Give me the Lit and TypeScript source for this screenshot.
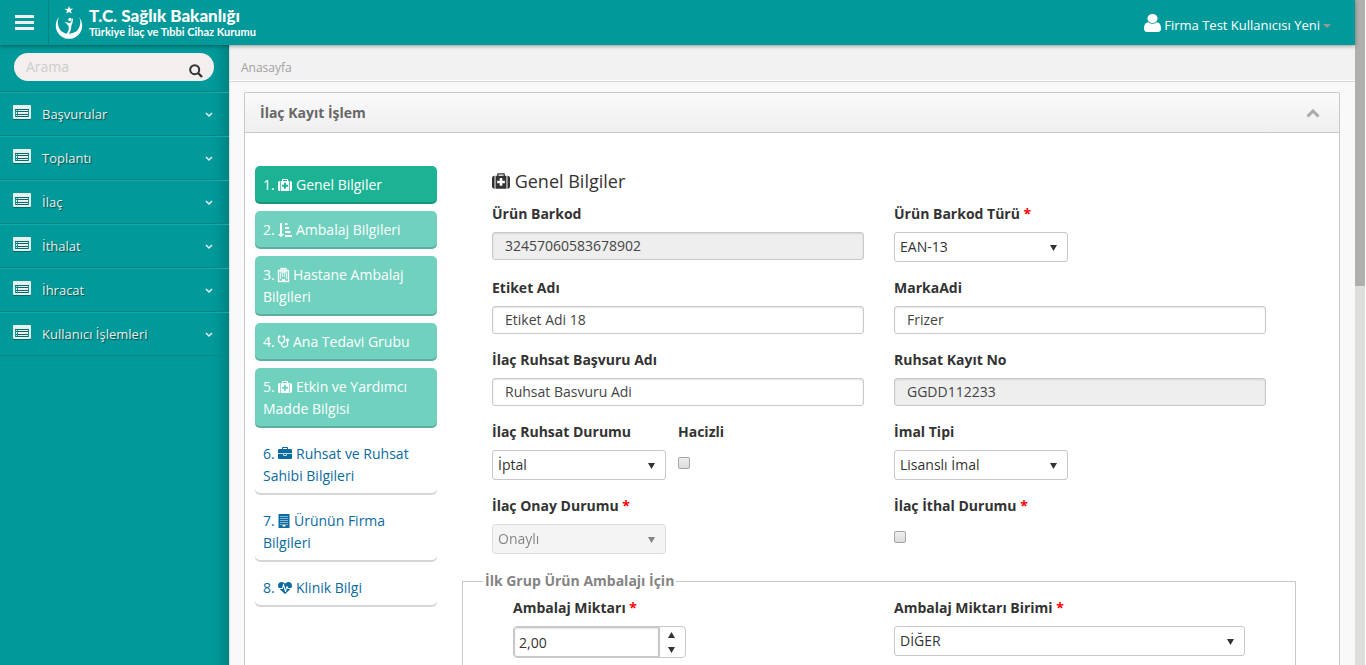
import { LitElement, html, css, nothing } from "lit";
import { customElement } from "lit/decorators.js";
import { classMap } from "lit/directives/class-map.js";

const ICONS: Record<string, { w: number; size: string; d: string }> = {
  medkit: {
    w: 1792,
    size: "",
    d: "M1280 1088v-192q0-14-9-23t-23-9h-224v-224q0-14-9-23t-23-9h-192q-14 0-23 9t-9 23v224h-224q-14 0-23 9t-9 23v192q0 14 9 23t23 9h224v224q0 14 9 23t23 9h192q14 0 23-9t9-23v-224h224q14 0 23-9t9-23zM640 384h512v-128h-512zM256 384v1280h-32q-92 0-158-66t-66-158v-832q0-92 66-158t158-66zM1440 384v1280h-1088v-1280h160v-160q0-40 28-68t68-28h576q40 0 68 28t28 68v160zM1792 608v832q0 92-66 158t-158 66h-32v-1280h32q92 0 158 66t66 158z",
  },
  sort: {
    w: 1792,
    size: "",
    d: "M736 1440q0 12-10 24l-319 319q-10 9-23 9-12 0-23-9l-320-320q-15-16-7-35 8-20 30-20h192v-1376q0-14 9-23t23-9h192q14 0 23 9t9 23v1376h192q14 0 23 9t9 23zM1792 1568v192q0 14-9 23t-23 9h-832q-14 0-23-9t-9-23v-192q0-14 9-23t23-9h832q14 0 23 9t9 23zM1600 1056v192q0 14-9 23t-23 9h-640q-14 0-23-9t-9-23v-192q0-14 9-23t23-9h640q14 0 23 9t9 23zM1408 544v192q0 14-9 23t-23 9h-448q-14 0-23-9t-9-23v-192q0-14 9-23t23-9h448q14 0 23 9t9 23zM1216 32v192q0 14-9 23t-23 9h-256q-14 0-23-9t-9-23v-192q0-14 9-23t23-9h256q14 0 23 9t9 23z",
  },
  hospital: {
    w: 1408,
    size: "narrow",
    d: "M0 320q0-64 64-64h256v-192q0-64 64-64h640q64 0 64 64v192h256q64 0 64 64v1408q0 64-64 64h-1280q-64 0-64-64zM128 384v1280h384v-256h384v256h384v-1280h-192v128q0 64-64 64h-640q-64 0-64-64v-128zM448 128v320h512v-320zM512 160h128v64h128v-64h128v256h-128v-64h-128v64h-128zM256 704h128v128h-128zM512 704h128v128h-128zM768 704h128v128h-128zM1024 704h128v128h-128zM256 960h128v128h-128zM512 960h128v128h-128zM768 960h128v128h-128zM1024 960h128v128h-128zM256 1216h128v128h-128zM1024 1216h128v128h-128z",
  },
  stethoscope: {
    w: 1408,
    size: "narrow",
    d: "M1280 640q0-26-19-45t-45-19-45 19-19 45 19 45 45 19 45-19 19-45zM1408 640q0 62-35.500 111t-92.500 70v395q0 159-131.500 271.500t-316.500 112.500-316.500-112.500-131.500-271.500v-132q-164-20-274-128t-110-252v-512q0-26 19-45t45-19q6 0 16 2 17-30 47-48t65-18q53 0 90.500 37.500t37.500 90.500-37.500 90.500-90.500 37.500q-33 0-64-18v402q0 106 94 181t226 75 226-75 94-181v-402q-31 18-64 18-53 0-90.500-37.500t-37.500-90.500 37.500-90.500 90.500-37.500q35 0 65 18t47 48q10-2 16-2 26 0 45 19t19 45v512q0 144-110 252t-274 128v132q0 106 94 181t226 75 226-75 94-181v-395q-57-21-92.500-70t-35.500-111q0-80 56-136t136-56 136 56 56 136z",
  },
  briefcase: {
    w: 1792,
    size: "",
    d: "M640 256h512v-128h-512v128zm1152 640v480q0 66-47 113t-113 47h-1472q-66 0-113-47t-47-113v-480h672v160q0 26 19 45t45 19h320q26 0 45-19t19-45v-160h672zm-768 0v128h-256v-128h256zm768-480v384h-1792v-384q0-66 47-113t113-47h352v-160q0-40 28-68t68-28h576q40 0 68 28t28 68v160h352q66 0 113 47t47 113z",
  },
  building: {
    w: 1408,
    size: "medium",
    d: "M64 0h1280q64 0 64 64v1664q0 64-64 64h-1280q-64 0-64-64v-1664q0-64 64-64zM256 256v128h128v-128zM512 256v128h128v-128zM768 256v128h128v-128zM1024 256v128h128v-128zM256 512v128h128v-128zM512 512v128h128v-128zM768 512v128h128v-128zM1024 512v128h128v-128zM256 768v128h128v-128zM512 768v128h128v-128zM768 768v128h128v-128zM1024 768v128h128v-128zM256 1024v128h128v-128zM512 1024v128h128v-128zM768 1024v128h128v-128zM1024 1024v128h128v-128zM256 1280v128h128v-128zM1024 1280v128h128v-128zM512 1344v256h384v-256z",
  },
  heartbeat: {
    w: 1792,
    size: "",
    d: "M1280 1024h305q-5 6-10 10.500t-9 7.500l-3 4-623 600q-18 18-44 18t-44-18l-624-602q-5-2-21-20h369q22 0 39.500-13.500t22.500-34.500l70-281 190 667q6 20 23 33t39 13q21 0 38-13t23-33l146-485 56 112q18 35 57 35zm512-428q0 145-103 300h-369l-111-221q-8-17-25.500-27t-36.500-8q-45 5-56 46l-129 430-196-686q-6-20-23.500-33t-39.500-13-39 13.500-22 34.500l-116 464h-423q-103-155-103-300 0-220 127-344t351-124q62 0 126.500 21.500t120 58 95.500 68.500 76 68q36-36 76-68t95.500-68.500 120-58 126.500-21.500q224 0 351 124t127 344z",
  },
};

const icon = (name: string) => html`<svg
  class="fa ${ICONS[name].size}"
  viewBox="0 0 ${ICONS[name].w} 1792"
  aria-hidden="true"
>
  <path fill-rule="evenodd" d=${ICONS[name].d} />
</svg>`;

const MENU = ["Başvurular", "Toplantı", "İlaç", "İthalat", "İhracat", "Kullanıcı İşlemleri"];

const STEPS = [
  { icon: "medkit", text: "Genel Bilgiler", state: "current" },
  { icon: "sort", text: "Ambalaj Bilgileri", state: "done" },
  { icon: "hospital", text: "Hastane Ambalaj Bilgileri", state: "done" },
  { icon: "stethoscope", text: "Ana Tedavi Grubu", state: "done" },
  { icon: "medkit", text: "Etkin ve Yardımcı Madde Bilgisi", state: "done" },
  { icon: "briefcase", text: "Ruhsat ve Ruhsat Sahibi Bilgileri", state: "" },
  { icon: "building", text: "Ürünün Firma Bilgileri", state: "" },
  { icon: "heartbeat", text: "Klinik Bilgi", state: "" },
];

@customElement("app-root")
export class AppRoot extends LitElement {
  static styles = css`
    * { box-sizing: border-box; }
    :host {
      display: grid;
      grid-template-columns: minmax(0, 1fr) 10px;
      height: 100vh;
      padding-right: 1px;
      overflow: hidden;
      background: #fff;
      font: 14px/22px "Open Sans", sans-serif;
      color: #333;
    }
    svg { fill: currentColor; }
    a { color: inherit; text-decoration: none; }
    button, input, select { font: inherit; color: inherit; margin: 0; }
    button { border: 0; padding: 0; background: none; }

    .app { display: flex; flex-direction: column; min-height: 0; }
    .scrollbar { background: #dededc; }
    .thumb { height: 43%; background: #afafad; }

    .top {
      display: flex;
      align-items: center;
      flex: none;
      height: 45px;
      background: #019999;
      color: #fff;
      box-shadow: 0 1px 4px rgba(0, 0, 0, 0.4);
      z-index: 1;
    }
    .toggle {
      display: flex;
      align-items: center;
      justify-content: center;
      width: 49px;
      height: 43px;
      border-right: 1px solid #0b8282;
      color: #f3efef;
    }
    .toggle svg { width: 19px; height: 16px; }
    .brand { display: flex; align-items: center; gap: 6px; padding-left: 6px; }
    .emblem { width: 28px; height: 33px; }
    .names { display: flex; flex-direction: column; font-family: Lato, sans-serif; white-space: nowrap; }
    .name { font-size: 17px; line-height: 18px; font-weight: 900; }
    .sub { font-size: 11px; line-height: 13px; font-weight: 700; }
    .user {
      display: flex;
      align-items: center;
      gap: 3px;
      margin-left: auto;
      padding: 4px 24px 0 0;
      font-size: 13px;
    }
    .user .person { width: 17px; height: 18px; margin-bottom: 4px; }
    .caret { width: 8px; height: 4px; margin-top: 2px; color: #999; }

    .body { display: flex; flex: 1; min-height: 0; }
    .side {
      width: 229px;
      flex: none;
      background: #019999;
      box-shadow: inset -14px 0 12px -8px rgba(0, 0, 0, 0.16);
      color: #e8f0ef;
    }
    .search {
      display: flex;
      align-items: center;
      height: 28px;
      margin: 8px 15px 10px 14px;
      padding: 0 11px 0 12px;
      border-radius: 14px;
      background: #f3efef;
      color: #333;
    }
    .search input { flex: 1; min-width: 0; border: 0; padding: 0; background: none; outline: none; }
    .search input::placeholder { color: #ccc; opacity: 1; }
    .search svg { display: block; width: 14px; height: 14px; margin-top: 7px; }
    .menu { list-style: none; margin: 0; padding: 0; border-bottom: 1px solid #0b8585; }
    .menu a {
      display: flex;
      align-items: center;
      height: 44px;
      padding: 0 16px 0 13px;
      border-top: 1px solid #0b8585;
      box-shadow: inset 0 1px #14a9a8;
      font-size: 13px;
      text-shadow: 1px 1px 1px rgba(0, 0, 0, 0.5);
    }
    .menu .list { width: 18px; height: 14px; margin: 0 11px 3px 0; filter: drop-shadow(0 1px 0 rgba(0, 0, 0, 0.3)); }
    .menu .chev { width: 8px; height: 6px; margin: 2px 0 0 auto; }

    .main { flex: 1; min-width: 0; background: #f9f9f9; border-left: 1px solid #dcdcdc; }
    .crumbs {
      height: 37px;
      padding: 12px 11px 0;
      background: #f2f2f2;
      border-bottom: 1px solid #d6d6d6;
      box-shadow: inset 0 -1px #fff;
      font-size: 12px;
      color: #a0a0a0;
    }
    .panel { margin: 10px 15px 0 14px; border: 1px solid #c8c8c8; border-radius: 2px; background: #fff; }
    .panel-head {
      display: flex;
      align-items: center;
      justify-content: space-between;
      height: 40px;
      padding: 0 19px 0 15px;
      background: linear-gradient(#fafafa, #efefef);
      border-bottom: 1px solid #c8c8c8;
      color: #676767;
    }
    .panel-head h1 { margin: 0; font-size: 14px; font-weight: 700; }
    .collapse { display: flex; padding-top: 2px; color: #aaa; }
    .collapse svg { width: 14px; height: 9px; }
    .wizard { display: flex; padding: 33px 73px 0 10px; }

    .steps { list-style: none; flex: none; width: 182px; margin: 0 55px 0 0; padding: 0; display: flex; flex-direction: column; gap: 7px; }
    .steps a {
      display: block;
      padding: 8px;
      border-radius: 5px;
      box-shadow: inset 0 -2px rgba(0, 0, 0, 0.16);
      color: #0a6ba0;
    }
    .steps .done { background: #70d1be; color: #fff; }
    .steps .current { background: #1cb394; color: #fff; }
    .fa { width: 1em; height: 1em; vertical-align: -2px; overflow: visible; }
    .narrow { width: 11px; stroke: currentColor; stroke-width: 50; }
    .medium { width: 12px; }

    .form { flex: 1; min-width: 0; display: flex; flex-direction: column; gap: 15px; }
    h2 { margin: 4px 0 -4px; font-size: 18px; line-height: 22px; font-weight: 400; }
    .row { display: grid; grid-template-columns: 1fr 1fr; column-gap: 30px; }
    .field { display: flex; flex-direction: column; align-items: flex-start; gap: 7px; min-width: 0; }
    .pair { display: flex; gap: 12px; }
    .field label { font-weight: 700; }
    .req { color: #f00; }
    .text {
      width: 100%;
      height: 28px;
      padding: 0 12px 2px;
      border: 1px solid #c8c8c8;
      border-radius: 3px;
      background: #fff;
      box-shadow: inset 0 1px 2px rgba(0, 0, 0, 0.1);
      color: #444;
    }
    .text[readonly] { background: #eee; }
    .select { display: grid; align-items: center; width: 174px; }
    .select.wide { width: 100%; }
    .select select {
      grid-area: 1 / 1;
      appearance: none;
      width: 100%;
      height: 30px;
      padding: 0 5px;
      border: 1px solid #c8c8c8;
      border-radius: 3px;
      background: #fff;
      color: #333;
    }
    .select svg { grid-area: 1 / 1; justify-self: end; width: 7px; height: 6px; margin: 2px 11px 0 0; pointer-events: none; }
    .select.off { opacity: 0.6; }
    .select.off select { background: #eee; opacity: 1; }
    .check {
      appearance: none;
      width: 12px;
      height: 12px;
      margin-top: 7px;
      border: 1px solid #a3a3a3;
      border-radius: 2px;
      background: linear-gradient(#efefef, #dcdcdc);
    }
    fieldset { min-width: 0; margin: 0 -30px; padding: 0 50px 40px; border: 1px solid #c8c8c8; }
    legend { margin-left: -30px; padding: 1px 2px; font-weight: 700; color: #848484; }
    .inner { padding-top: 4px; }
    .spin { display: flex; width: 173px; height: 32px; border: 1px solid #c8c8c8; border-radius: 4px; }
    .spin input {
      flex: 1;
      min-width: 0;
      padding: 1px 4px 0;
      border: 1px solid #c8c8c8;
      border-radius: 3px 0 0 3px;
      box-shadow: inset 0 1px 2px rgba(0, 0, 0, 0.1);
    }
    .arrows { display: flex; flex-direction: column; width: 26px; padding-right: 2px; border-left: 1px solid #c8c8c8; }
    .arrows button { flex: 1; display: flex; align-items: center; justify-content: center; }
    .arrows svg { width: 7px; height: 6px; }
  `;

  private label(id: string, text: string, req = false) {
    return html`<label for=${id}>${text}${req ? html` <span class="req">*</span>` : nothing}</label>`;
  }

  private text(id: string, text: string, value: string, readonly = false) {
    return html`<div class="field">
      ${this.label(id, text)}
      <input class="text" id=${id} type="text" .value=${value} ?readonly=${readonly} />
    </div>`;
  }

  private select(id: string, text: string, value: string, o: { req?: boolean; off?: boolean; wide?: boolean } = {}) {
    return html`<div class="field">
      ${this.label(id, text, o.req)}
      <div class=${classMap({ select: true, off: !!o.off, wide: !!o.wide })}>
        <select id=${id} ?disabled=${!!o.off}><option>${value}</option></select>
        <svg viewBox="0 0 7 6" aria-hidden="true"><path d="M0 0h7L3.500 6z" /></svg>
      </div>
    </div>`;
  }

  private check(id: string, text: string, req = false) {
    return html`<div class="field">
      ${this.label(id, text, req)}
      <input class="check" id=${id} type="checkbox" />
    </div>`;
  }

  render() {
    return html`
      <div class="app">
        <header class="top">
          <button class="toggle" aria-label="Menü">
            <svg viewBox="0 0 19 16"><path d="M0 0h19v3H0zM0 6h19v3H0zM0 12h19v3H0z" /></svg>
          </button>
          <a class="brand" href="#">
            <svg class="emblem" viewBox="0 0 28 33" aria-hidden="true">
              <path d="M4 11A13.200 13.200 0 1 0 24 11Q26 15 25 19A11.200 10.500 0 0 1 4 22Q1.500 17 4 11z" />
              <path d="M14 0l1 2.700 3-.2-2.200 2.200 1 2.800L14 6 11.200 7.500l.9-2.800L9.500 2.800l3.300.1z" />
              <circle cx="15" cy="13.500" r="1.700" />
              <path d="M9 16q4 .6 5.500 1 2-.2 2.600-4.500l.9.300q-.2 4.700-1.600 6.700.2 4.500-2.700 8.500l-2.700 1.200q3.200-5 2.800-8-.8-3.200-4.800-5.200z" />
            </svg>
            <span class="names">
              <span class="name">T.C. Sağlık Bakanlığı</span>
              <span class="sub">Türkiye İlaç ve Tıbbi Cihaz Kurumu</span>
            </span>
          </a>
          <a class="user" href="#">
            <svg class="person" viewBox="256 128 1280 1536" preserveAspectRatio="none" aria-hidden="true">
              <path d="M1536 1399q0 109-62.500 187t-150.500 78h-854q-88 0-150.500-78t-62.500-187q0-85 8.500-160.500t31.500-152 58.500-131 94-89 134.500-34.500q131 128 313 128t313-128q76 0 134.500 34.500t94 89 58.500 131 31.500 152 8.500 160.500zm-256-887q0 159-112.500 271.500t-271.500 112.500-271.500-112.500-112.500-271.500 112.500-271.500 271.500-112.500 271.500 112.500 112.500 271.500z" />
            </svg>
            <span>Firma Test Kullanıcısı Yeni</span>
            <svg class="caret" viewBox="0 0 8 4" aria-hidden="true"><path d="M0 0h8L4 4z" /></svg>
          </a>
        </header>
        <div class="body">
          <nav class="side">
            <div class="search">
              <input type="text" placeholder="Arama" aria-label="Arama" />
              <button aria-label="Ara">
                <svg viewBox="0 0 14 14">
                  <circle cx="5.700" cy="5.700" r="4.500" fill="none" stroke="currentColor" stroke-width="2" />
                  <path d="M9 9l4 4" stroke="currentColor" stroke-width="2.400" />
                </svg>
              </button>
            </div>
            <ul class="menu">
              ${MENU.map(
                (m) => html`<li>
                  <a href="#">
                    <svg class="list" viewBox="0 0 18 14" aria-hidden="true">
                      <path
                        fill-rule="evenodd"
                        d="M1 0h16q1 0 1 1v12q0 1-1 1H1q-1 0-1-1V1q0-1 1-1zM2 4v8h14V4zM3 5h1v1H3zM5 5h10v1H5zM3 7h1v2H3zM5 7h10v2H5zM3 10h1v1H3zM5 10h10v1H5z"
                      />
                    </svg>
                    <span>${m}</span>
                    <svg class="chev" viewBox="0 0 8 6" aria-hidden="true">
                      <path d="M1 1l3 3 3-3" fill="none" stroke="currentColor" stroke-width="1.500" />
                    </svg>
                  </a>
                </li>`
              )}
            </ul>
          </nav>
          <main class="main">
            <div class="crumbs"><a href="#">Anasayfa</a></div>
            <section class="panel">
              <div class="panel-head">
                <h1>İlaç Kayıt İşlem</h1>
                <button class="collapse" aria-label="Daralt">
                  <svg viewBox="0 0 14 9"><path d="M1.500 7.500L7 2l5.500 5.500" fill="none" stroke="currentColor" stroke-width="3" /></svg>
                </button>
              </div>
              <div class="wizard">
                <ol class="steps">
                  ${STEPS.map(
                    (s, i) => html`<li><a href="#" class=${s.state}>${i + 1}. ${icon(s.icon)} ${s.text}</a></li>`
                  )}
                </ol>
                <form class="form">
                  <h2>${icon("medkit")} Genel Bilgiler</h2>
                  <div class="row">
                    ${this.text("barkod", "Ürün Barkod", "32457060583678902", true)}
                    ${this.select("barkod-turu", "Ürün Barkod Türü", "EAN-13", { req: true })}
                  </div>
                  <div class="row">
                    ${this.text("etiket", "Etiket Adı", "Etiket Adi 18")}
                    ${this.text("marka", "MarkaAdi", "Frizer")}
                  </div>
                  <div class="row">
                    ${this.text("basvuru", "İlaç Ruhsat Başvuru Adı", "Ruhsat Basvuru Adi")}
                    ${this.text("kayit", "Ruhsat Kayıt No", "GGDD112233", true)}
                  </div>
                  <div class="row">
                    <div class="pair">
                      ${this.select("ruhsat-durumu", "İlaç Ruhsat Durumu", "İptal")}
                      ${this.check("hacizli", "Hacizli")}
                    </div>
                    ${this.select("imal", "İmal Tipi", "Lisanslı İmal")}
                  </div>
                  <div class="row">
                    ${this.select("onay", "İlaç Onay Durumu", "Onaylı", { req: true, off: true })}
                    ${this.check("ithal", "İlaç İthal Durumu", true)}
                  </div>
                  <fieldset>
                    <legend>İlk Grup Ürün Ambalajı İçin</legend>
                    <div class="row inner">
                      <div class="field">
                        ${this.label("miktar", "Ambalaj Miktarı", true)}
                        <div class="spin">
                          <input id="miktar" type="text" .value=${"2,00"} />
                          <div class="arrows">
                            <button type="button" aria-label="Artır">
                              <svg viewBox="0 0 7 6"><path d="M0 6h7L3.500 0z" /></svg>
                            </button>
                            <button type="button" aria-label="Azalt">
                              <svg viewBox="0 0 7 6"><path d="M0 0h7L3.500 6z" /></svg>
                            </button>
                          </div>
                        </div>
                      </div>
                      ${this.select("birim", "Ambalaj Miktarı Birimi", "DİĞER", { req: true, wide: true })}
                    </div>
                  </fieldset>
                </form>
              </div>
            </section>
          </main>
        </div>
      </div>
      <div class="scrollbar"><div class="thumb"></div></div>
    `;
  }
}
